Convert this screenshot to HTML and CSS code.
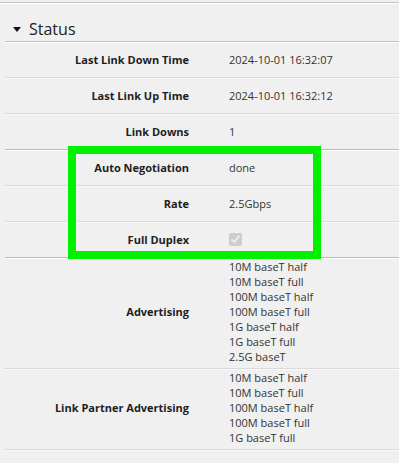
FILE: index.html
```html
<!DOCTYPE html>
<html>
<head>
<meta charset="utf-8">
<link rel="stylesheet" href="styles.css">
</head>
<body>
<div class="top-rule"></div>
<div class="section">
  <div class="section-title"><span class="caret"></span>Status</div>
  <div class="row"><div class="label">Last Link Down Time</div><div class="value">2024-10-01 16:32:07</div></div>
  <div class="row"><div class="label">Last Link Up Time</div><div class="value">2024-10-01 16:32:12</div></div>
  <div class="row group-end"><div class="label">Link Downs</div><div class="value">1</div></div>
  <div class="row"><div class="label">Auto Negotiation</div><div class="value">done</div></div>
  <div class="row"><div class="label">Rate</div><div class="value">2.5Gbps</div></div>
  <div class="row group-end"><div class="label">Full Duplex</div><div class="value"><input class="check" type="checkbox" checked disabled></div></div>
  <div class="row multi"><div class="label">Advertising</div><div class="value">10M baseT half<br>10M baseT full<br>100M baseT half<br>100M baseT full<br>1G baseT half<br>1G baseT full<br>2.5G baseT</div></div>
  <div class="row multi"><div class="label">Link Partner Advertising</div><div class="value">10M baseT half<br>10M baseT full<br>100M baseT half<br>100M baseT full<br>1G baseT full</div></div>
</div>
<div class="highlight"></div>
</body>
</html>
```
FILE: styles.css
```css
html, body {
  margin: 0;
  padding: 0;
  background: #f0f0f0;
}
body {
  font-family: "Open Sans", "Noto Sans", sans-serif;
  font-size: 11px;
  color: #222;
  position: relative;
  height: 463px;
  overflow: hidden;
}
.top-rule {
  margin-top: 2px;
  border-top: 1px solid #c4c4c4;
  border-bottom: 1px solid #fff;
}
.section {
  margin-left: 5px;
}
.section-title {
  display: flex;
  align-items: center;
  height: 22px;
  padding: 14px 0 1px 8px;
  font-size: 16px;
  color: #222;
  border-bottom: 1px solid #c4c4c4;
  box-shadow: 0 1px 0 #fff;
}
.caret {
  width: 0;
  height: 0;
  border-left: 4px solid transparent;
  border-right: 4px solid transparent;
  border-top: 5px solid #111;
  margin-right: 8px;
  margin-top: 1px;
}
.row {
  display: grid;
  grid-template-columns: 184px 1fr;
  column-gap: 40px;
  align-items: center;
  padding: 10px 0;
  line-height: 15px;
  border-bottom: 1px solid #dadada;
  box-shadow: 0 1px 0 #fafafa;
}
.row.group-end {
  border-bottom-color: #bcbcbc;
  box-shadow: 0 1px 0 #fff;
}
.row.multi {
  padding: 1px 0 4px;
}
.label {
  text-align: right;
  font-weight: bold;
  color: #1e1e1e;
}
.value {
  color: #333;
}
.check {
  margin: 0;
  width: 13px;
  height: 13px;
  display: block;
}
.highlight {
  position: absolute;
  left: 68px;
  top: 146px;
  width: 237px;
  height: 97px;
  border: 8px solid #00f000;
}
```
